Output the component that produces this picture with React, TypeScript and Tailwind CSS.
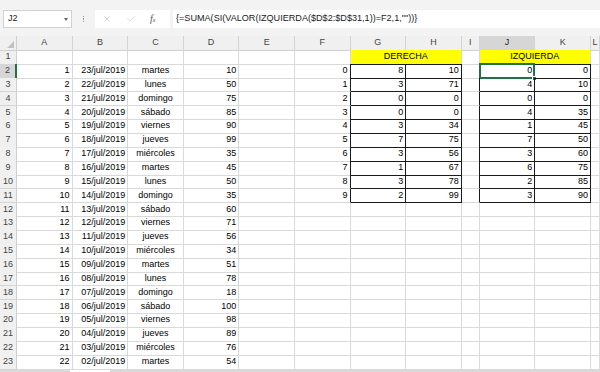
import { X, Check } from 'lucide-react';

const font = { fontFamily: '"Liberation Sans", Arial, sans-serif' };

const dias = ['martes', 'lunes', 'domingo', 'sábado', 'viernes', 'jueves', 'miércoles'];
const valoresD = [10, 50, 75, 85, 90, 99, 35, 45, 50, 35, 60, 71, 56, 34, 51, 78, 18, 100, 98, 89, 76, 54];
const derecha = [[8, 10], [3, 71], [0, 0], [0, 0], [3, 34], [7, 75], [3, 56], [1, 67], [3, 78], [2, 99]];
const izquierda = [[0, 0], [4, 10], [0, 0], [4, 35], [1, 45], [7, 50], [3, 60], [6, 75], [2, 85], [3, 90]];
const columnas = ['A', 'B', 'C', 'D', 'E', 'F', 'G', 'H', 'I', 'J', 'K', 'L'];

const gridCols = 'grid grid-cols-[17px_repeat(8,55.6px)_18px_repeat(2,55.6px)_1fr]';

type CellProps = {
  children?: React.ReactNode;
  align?: 'left' | 'right' | 'center';
  right?: 'grid' | 'dark';
  bottom?: 'grid' | 'dark';
  className?: string;
};

function Cell({ children, align = 'right', right = 'grid', bottom = 'grid', className = '' }: CellProps) {
  const alignCls = align === 'right' ? 'justify-end pr-[2px]' : align === 'center' ? 'justify-center' : 'justify-start pl-[2px]';
  const rightCls = right === 'dark' ? 'border-r-[#1a1a1a]' : 'border-r-[#d9d9d9]';
  const bottomCls = bottom === 'dark' ? 'border-b-[#1a1a1a]' : 'border-b-[#d9d9d9]';
  return (
    <div className={`relative flex items-center overflow-visible whitespace-nowrap border-r border-b ${rightCls} ${bottomCls} ${alignCls} ${className}`}>
      {children}
    </div>
  );
}

function RowHeader({ n, active }: { n: number; active?: boolean }) {
  return (
    <div
      className={`flex items-center justify-center border-b border-r text-[#444] ${
        active ? 'bg-[#d6d6d6] border-b-[#c8c8c8] border-r-2 border-r-[#217346]' : 'bg-[#f0f0f0] border-b-[#d4d4d4] border-r-[#cfcfcf]'
      }`}
    >
      {n}
    </div>
  );
}

export default function App() {
  const rows = Array.from({ length: 22 }, (_, i) => {
    const day = 23 - i;
    return {
      a: i + 1,
      b: `${String(day).padStart(2, '0')}/jul/2019`,
      c: dias[i % 7],
      d: valoresD[i],
    };
  });

  return (
    <div className="w-[600px] h-[372px] overflow-hidden bg-white text-[9px] text-black" style={font}>
      {/* barra de fórmulas */}
      <div className="h-[36px] bg-[#f3f3f3] flex items-start pt-[10px] pl-[3px]">
        <div className="w-[69px] h-[18px] bg-white border border-[#d2d2d2] flex items-center justify-between pl-[4px] pr-[3px] text-[9px] text-[#222]">
          <span>J2</span>
          <span className="w-0 h-0 border-l-[2.5px] border-r-[2.5px] border-t-[3px] border-l-transparent border-r-transparent border-t-[#666]" />
        </div>
        <div className="w-[23px] h-[18px] flex flex-col items-center justify-center gap-[1px]">
          <span className="w-[1.5px] h-[1.5px] bg-[#9a9a9a]" />
          <span className="w-[1.5px] h-[1.5px] bg-[#9a9a9a]" />
          <span className="w-[1.5px] h-[1.5px] bg-[#9a9a9a]" />
        </div>
        <div className="w-[75px] h-[18px] bg-white flex items-center pl-[7px] gap-[14px] text-[#b3b3b3]">
          <X size={10} strokeWidth={1.2} />
          <Check size={10} strokeWidth={1.2} />
          <span className="text-[#555] text-[10px] italic leading-none" style={{ fontFamily: '"Liberation Serif", serif' }}>
            f<span className="text-[6px]">x</span>
          </span>
        </div>
        <div className="ml-[3px] flex-1 h-[18px] bg-white flex items-center pl-[3px] text-[9.1px] text-[#222] whitespace-nowrap">
          {'{=SUMA(SI(VALOR(IZQUIERDA($D$2:$D$31,1))=F2,1,""))}'}
        </div>
      </div>

      {/* encabezados de columna */}
      <div className={`${gridCols} h-[14px] bg-[#f0f0f0] text-[#444]`}>
        <div className="relative border-r border-b border-[#cfcfcf]">
          <svg className="absolute right-[2px] bottom-[2px]" width="7" height="7" viewBox="0 0 7 7">
            <path d="M7 0 L7 7 L0 7 Z" fill="#c2c2c2" />
          </svg>
        </div>
        {columnas.map((c) => (
          <div
            key={c}
            className={`flex items-center justify-center border-r border-b border-r-[#d4d4d4] ${
              c === 'J' ? 'bg-[#d6d6d6] border-b-[#c4c4c4] text-[#262626]' : 'border-b-[#cfcfcf]'
            }`}
          >
            {c}
          </div>
        ))}
      </div>

      {/* fila 1 */}
      <div className={`${gridCols} h-[14px]`}>
        <RowHeader n={1} />
        <Cell />
        <Cell />
        <Cell />
        <Cell />
        <Cell />
        <Cell />
        <Cell align="center" bottom="dark" className="col-span-2 bg-[#ffff00]">DERECHA</Cell>
        <Cell />
        <Cell align="center" bottom="dark" className="col-span-2 bg-[#ffff00]">IZQUIERDA</Cell>
        <Cell />
      </div>

      {/* filas 2-23 */}
      {rows.map((r, i) => {
        const inTable = i < 10;
        const der = derecha[i];
        const izq = izquierda[i];
        return (
          <div key={i} className={`${gridCols} h-[13.86px]`}>
            <RowHeader n={i + 2} active={i === 0} />
            <Cell>{r.a}</Cell>
            <Cell>{r.b}</Cell>
            <Cell align="center">{r.c}</Cell>
            <Cell>{r.d}</Cell>
            <Cell />
            <Cell right={inTable ? 'dark' : 'grid'}>{inTable ? i : null}</Cell>
            <Cell right={inTable ? 'dark' : 'grid'} bottom={inTable ? 'dark' : 'grid'}>{der ? der[0] : null}</Cell>
            <Cell right={inTable ? 'dark' : 'grid'} bottom={inTable ? 'dark' : 'grid'}>{der ? der[1] : null}</Cell>
            <Cell right={inTable ? 'dark' : 'grid'} />
            <Cell right={inTable ? 'dark' : 'grid'} bottom={inTable ? 'dark' : 'grid'}>
              {izq ? izq[0] : null}
              {i === 0 && (
                <>
                  <span className="absolute -left-px -top-px -right-px -bottom-px border-2 border-[#217346] pointer-events-none" />
                  <span className="absolute -right-[3px] -bottom-[3px] w-[5px] h-[5px] bg-[#217346] border border-white" />
                </>
              )}
            </Cell>
            <Cell right={inTable ? 'dark' : 'grid'} bottom={inTable ? 'dark' : 'grid'}>{izq ? izq[1] : null}</Cell>
            <Cell />
          </div>
        );
      })}

      {/* barra de hojas */}
      <div className="h-[4px] bg-[#d9d9d9] flex">
        <div className="ml-[70px] w-[40px] h-full bg-white" />
      </div>
    </div>
  );
}
